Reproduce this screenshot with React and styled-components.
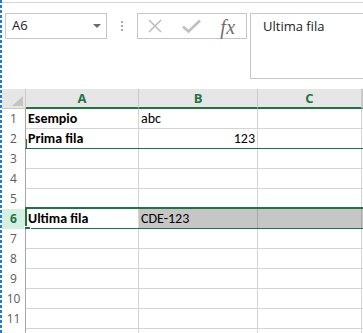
import React from 'react'
import styled, { createGlobalStyle } from 'styled-components'

const green = '#217346'

const GlobalStyle = createGlobalStyle`
  html, body {
    margin: 0;
    padding: 0;
    background: #fff;
  }
  body {
    overflow: hidden;
  }
`

const Window = styled.div`
  width: 363px;
  height: 333px;
  overflow: hidden;
  box-sizing: border-box;
  padding: 2px 0 0 2px;
  background:
    repeating-linear-gradient(to bottom, #1f7bd6 0 3px, transparent 3px 5px) left top / 2px 100% no-repeat,
    #fff;
  display: flex;
  flex-direction: column;
  font-family: "Open Sans", "Noto Sans", sans-serif;
`

const Toolbar = styled.div`
  height: 87px;
  flex: none;
  box-sizing: border-box;
  border-top: 1px solid #d5d5d5;
  padding: 10px 0 0 3px;
  display: flex;
  align-items: flex-start;
`

const NameBox = styled.div`
  width: 102px;
  height: 26px;
  flex: none;
  box-sizing: border-box;
  border: 1px solid #c6c6c6;
  padding: 0 5px 2px 6px;
  display: flex;
  align-items: center;
  justify-content: space-between;
  font-size: 13px;
  line-height: 18px;
  color: #222;
`

const Caret = styled.span`
  width: 0;
  height: 0;
  margin-top: 2px;
  border-left: 4px solid transparent;
  border-right: 4px solid transparent;
  border-top: 4px solid #6b6b6b;
`

const Grip = styled.div`
  width: 30px;
  height: 26px;
  flex: none;
  display: flex;
  flex-direction: column;
  align-items: center;
  justify-content: center;
  gap: 2px;
`

const Dot = styled.span`
  width: 2px;
  height: 2px;
  background: #a9a9a9;
`

const FxBox = styled.div`
  width: 110px;
  height: 26px;
  flex: none;
  box-sizing: border-box;
  border: 1px solid #c6c6c6;
  display: flex;
  align-items: center;
`

const IconSlot = styled.div`
  width: ${p => p.$w}px;
  height: 24px;
  display: flex;
  align-items: center;
  justify-content: center;
`

const Fx = styled.span`
  font: italic 20px/24px "Liberation Serif", "DejaVu Serif", serif;
  color: #707070;
  letter-spacing: 0.5px;
  margin-top: 1px;
`

const FormulaInput = styled.div`
  flex: 1;
  height: 66px;
  margin: 0 -10px 0 3px;
  box-sizing: border-box;
  border: 1px solid #c6c6c6;
  padding: 3px 0 0 12px;
  font-size: 13px;
  line-height: 18px;
  color: #222;
`

const Sheet = styled.div`
  display: flex;
  flex-direction: column;
`

const HeadRow = styled.div`
  display: flex;
  height: 20px;
  flex: none;
`

const Corner = styled.div`
  width: 24px;
  flex: none;
  box-sizing: border-box;
  position: relative;
  background: #e6e6e6;
  border-right: 1px solid #c9c9c9;
  border-bottom: 1px solid #c9c9c9;

  &::after {
    content: '';
    position: absolute;
    right: 2px;
    bottom: 2px;
    border-style: solid;
    border-width: 0 0 10px 11px;
    border-color: transparent transparent #c4c4c4 transparent;
  }
`

const ColHead = styled.div`
  width: ${p => (p.$w ? `${p.$w}px` : 'auto')};
  flex: ${p => (p.$w ? 'none' : '1')};
  box-sizing: border-box;
  background: #e6e6e6;
  border-right: 1px solid #c9c9c9;
  border-bottom: 2px solid ${green};
  display: flex;
  align-items: center;
  justify-content: center;
  font-weight: bold;
  font-size: 13px;
  line-height: 18px;
  color: ${green};
`

const Row = styled.div`
  display: flex;
  height: 20px;
  flex: none;
  position: relative;
`

const RowHead = styled.div`
  width: 24px;
  flex: none;
  box-sizing: border-box;
  border-right: 1px solid ${p => (p.$active ? green : '#a6a6a6')};
  background: ${p => (p.$active ? '#d3f0e0' : '#fff')};
  padding-bottom: 1px;
  display: flex;
  align-items: flex-end;
  justify-content: center;
  font-size: 12px;
  line-height: 18px;
  font-weight: ${p => (p.$active ? 'bold' : 'normal')};
  color: ${p => (p.$active ? green : '#5b5b5b')};
`

const Cell = styled.div`
  width: ${p => (p.$w ? `${p.$w}px` : 'auto')};
  flex: ${p => (p.$w ? 'none' : '1')};
  box-sizing: border-box;
  border-right: 1px solid ${p => (p.$sel ? '#a9a9a9' : '#d4d4d4')};
  border-bottom: 1px solid #d4d4d4;
  background: ${p => (p.$sel ? '#c6c6c6' : '#fff')};
  padding: 0 2px 0 2px;
  display: flex;
  align-items: flex-end;
  justify-content: ${p => (p.$right ? 'flex-end' : 'flex-start')};
  font-family: Calibri, Carlito, Lato, sans-serif;
  font-size: 14px;
  line-height: 18px;
  font-weight: ${p => (p.$bold ? 'bold' : 'normal')};
  color: #000;
  white-space: nowrap;
  overflow: hidden;
`

// green line left under row 2
const RowRule = styled.div`
  position: absolute;
  left: 23px;
  right: 0;
  bottom: -1px;
  height: 2px;
  background: ${green};
`

const Tick = styled.div`
  position: absolute;
  left: 24px;
  top: 10px;
  width: 1px;
  height: 18px;
  background: ${green};
`

const Selection = styled.div`
  position: absolute;
  left: 23px;
  right: -4px;
  top: -2px;
  height: 23px;
  box-sizing: border-box;
  border: 2px solid ${green};
  pointer-events: none;
`

const FillHandle = styled.div`
  position: absolute;
  left: -2px;
  bottom: -4px;
  width: 5px;
  height: 5px;
  background: ${green};
  box-shadow: 0 0 0 1px #fff;
`

const cols = [
  { id: 'A', w: 113 },
  { id: 'B', w: 119 },
  { id: 'C', w: 104 },
  { id: 'D', w: 0 },
]

// row 12 only peeks in at the bottom edge, its number is below the fold
const rows = [
  { n: 1, A: 'Esempio', B: 'abc', boldA: true },
  { n: 2, A: 'Prima fila', B: '123', boldA: true, rightB: true, rule: true },
  { n: 3 },
  { n: 4 },
  { n: 5 },
  { n: 6, A: 'Ultima fila', B: 'CDE-123', boldA: true, selected: true },
  { n: 7 },
  { n: 8 },
  { n: 9 },
  { n: 10 },
  { n: 11 },
  { n: 12, hidden: true },
]

const CloseIcon = () => (
  <svg width="14" height="14" viewBox="0 0 14 14">
    <path d="M1 1 L13 13 M13 1 L1 13" stroke="#c0c0c0" strokeWidth="1.7" fill="none" />
  </svg>
)

const CheckIcon = () => (
  <svg width="19" height="14" viewBox="0 0 19 14">
    <path d="M1 7.5 L6.5 12.5 L18 1.5" stroke="#c0c0c0" strokeWidth="2.6" fill="none" />
  </svg>
)

export default function App() {
  return (
    <>
      <GlobalStyle />
      <Window>
        <Toolbar>
          <NameBox>
            <span>A6</span>
            <Caret />
          </NameBox>
          <Grip>
            <Dot />
            <Dot />
            <Dot />
          </Grip>
          <FxBox>
            <IconSlot $w={34}><CloseIcon /></IconSlot>
            <IconSlot $w={39}><CheckIcon /></IconSlot>
            <IconSlot $w={34}><Fx>fx</Fx></IconSlot>
          </FxBox>
          <FormulaInput>Ultima fila</FormulaInput>
        </Toolbar>

        <Sheet>
          <HeadRow>
            <Corner />
            {cols.map(c => (
              <ColHead key={c.id} $w={c.w}>{c.id !== 'D' ? c.id : ''}</ColHead>
            ))}
          </HeadRow>
          {rows.map(r => (
            <Row key={r.n}>
              <RowHead $active={r.selected}>{r.hidden ? '' : r.n}</RowHead>
              {cols.map(c => (
                <Cell
                  key={c.id}
                  $w={c.w}
                  $sel={r.selected && c.id !== 'A'}
                  $bold={c.id === 'A' && r.boldA}
                  $right={c.id === 'B' && r.rightB}
                >
                  {r[c.id]}
                </Cell>
              ))}
              {r.rule && <RowRule />}
              {r.rule && <Tick />}
              {r.selected && (
                <Selection>
                  <FillHandle />
                </Selection>
              )}
            </Row>
          ))}
        </Sheet>
      </Window>
    </>
  )
}
